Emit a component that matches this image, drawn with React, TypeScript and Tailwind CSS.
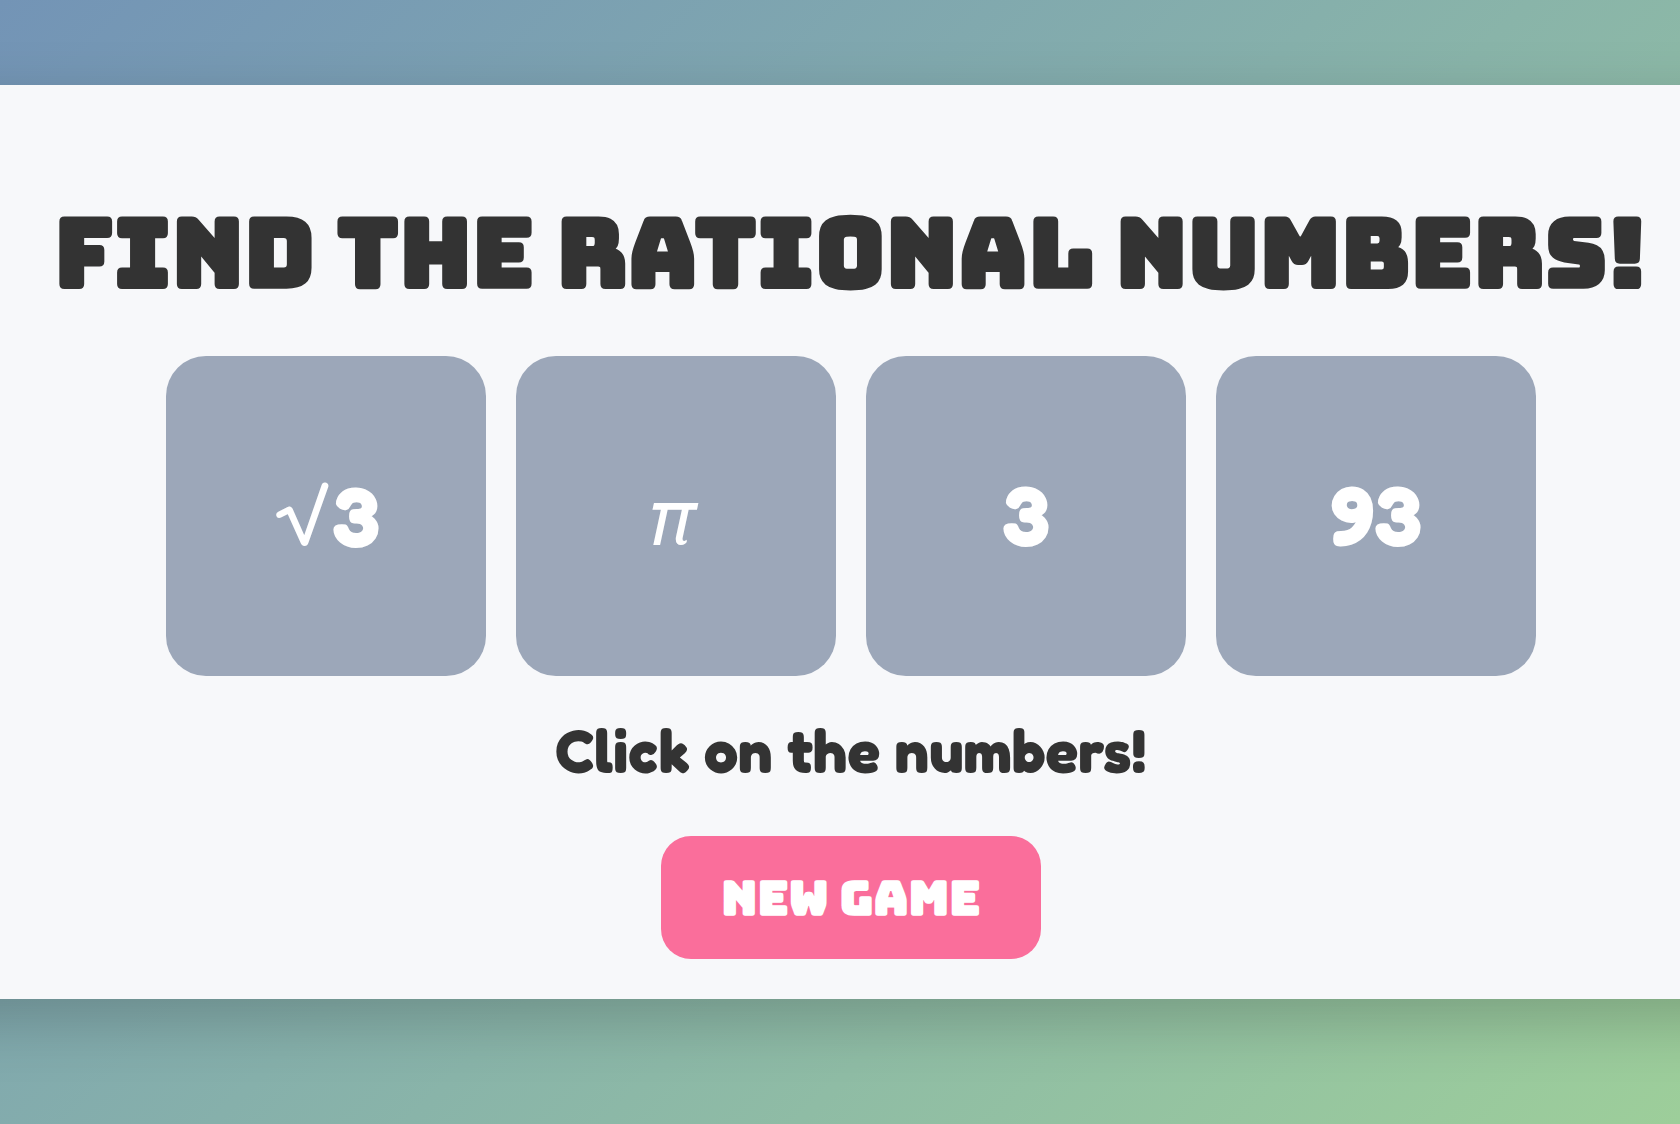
import React, { useState } from 'react';

interface Tile {
  symbol?: string;
  symbolClass?: string;
  digits?: string;
  rational: boolean;
}

const TILES: Tile[] = [
  { symbol: '√', symbolClass: "font-['Quicksand','Liberation_Serif',serif] text-[92px] leading-none font-medium", digits: '3', rational: false },
  { symbol: 'π', symbolClass: "font-['Lobster','Liberation_Serif',serif] font-normal", rational: false },
  { digits: '3', rational: true },
  { digits: '93', rational: true },
];

const START_MESSAGE = 'Click on the numbers!';

export default function App() {
  const [message, setMessage] = useState(START_MESSAGE);

  const handlePick = (tile: Tile) => {
    setMessage(tile.rational ? 'Correct!' : 'Try again!');
  };

  return (
    <div className="min-h-screen overflow-hidden bg-linear-135 from-[#7394b6] to-[#9dce9a] pt-[85px] pb-[125px]">
      <main className="-mx-20 flex flex-col items-center bg-[#f7f8fa] pt-[116px] pr-20 pb-10 pl-[102px] shadow-[0_20px_60px_rgba(0,0,0,0.2)]">
        <h1 className="font-['Bungee','Inter',sans-serif] text-[96px] leading-[105px] font-bold whitespace-nowrap text-[#333] uppercase">
          Find the rational numbers!
        </h1>

        <div className="mt-[50px] flex gap-[30px]">
          {TILES.map((tile, index) => (
            <button
              key={index}
              onClick={() => handlePick(tile)}
              className="size-80 cursor-pointer rounded-[40px] bg-[#9ca7b9] pb-1 font-['Fredoka','Lato',sans-serif] text-[84px] leading-[96px] font-bold text-white"
            >
              {tile.symbol && <span className={tile.symbolClass}>{tile.symbol}</span>}
              {tile.digits}
            </button>
          ))}
        </div>

        <p className="mt-[38px] font-['Fredoka','Lato',sans-serif] text-[61px] leading-[72px] font-bold text-[#333]">
          {message}
        </p>

        <button
          onClick={() => setMessage(START_MESSAGE)}
          className="mt-[50px] cursor-pointer rounded-[30px] bg-[#fa6e9b] px-[60px] py-[30px] font-['Bungee','Inter',sans-serif] text-[48px] leading-[63px] font-bold text-white uppercase"
        >
          New Game
        </button>
      </main>
    </div>
  );
}
